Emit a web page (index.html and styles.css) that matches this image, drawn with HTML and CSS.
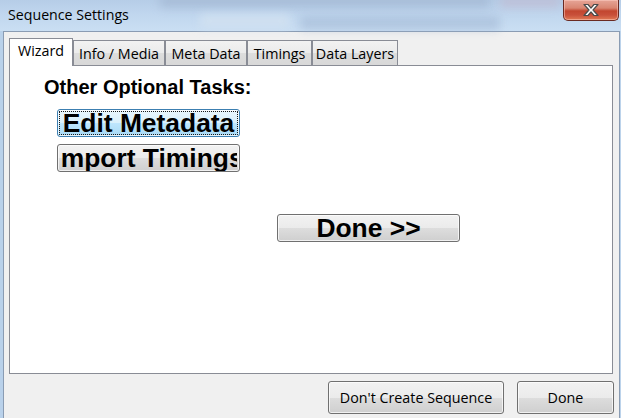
FILE: index.html
```html
<!DOCTYPE html>
<html>
<head>
<meta charset="utf-8">
<link rel="stylesheet" href="styles.css">
</head>
<body>
<div class="window">
  <div class="titlebar">
    <span class="glass g1"></span>
    <span class="glass g2"></span>
    <span class="glass g3"></span>
    <span class="glass g4"></span>
    <span class="title">Sequence Settings</span>
    <div class="close">
      <svg width="22" height="14" viewBox="0 0 22 14">
        <path d="M4 1.5h4l3 3.6 3-3.6h4l-5 5.5 5 5.5h-4l-3-3.6-3 3.6h-4l5-5.5z" fill="#fff" stroke="#4a4a4a" stroke-width="1.2" stroke-linejoin="round"/>
      </svg>
    </div>
  </div>
  <div class="client">
    <div class="tabs">
      <div class="tab active t-wizard">Wizard</div>
      <div class="tab t-info">Info / Media</div>
      <div class="tab t-meta">Meta Data</div>
      <div class="tab t-timings">Timings</div>
      <div class="tab t-layers">Data Layers</div>
    </div>
    <div class="panel">
      <div class="heading">Other Optional Tasks:</div>
      <button class="big focused b-edit"><span class="clip">Edit Metadata</span></button>
      <button class="big b-import"><span class="clip">Import Timings</span></button>
      <button class="big b-done"><span class="clip">Done &gt;&gt;</span></button>
    </div>
    <div class="footer">
      <button class="btn b-dont">Don't Create Sequence</button>
      <button class="btn b-fin">Done</button>
    </div>
  </div>
</div>
</body>
</html>
```
FILE: styles.css
```css
html, body {
  margin: 0;
  padding: 0;
  background: #f0f0f0;
}

.window {
  width: 621px;
  height: 418px;
  display: flex;
  flex-direction: column;
  background: linear-gradient(90deg, #b9d1ea 0%, #c3d8ee 50%, #bcd3eb 100%);
  overflow: hidden;
  font-family: "Open Sans", "Noto Sans", sans-serif;
}

.titlebar {
  height: 31px;
  flex: none;
  display: flex;
  align-items: flex-start;
  position: relative;
  background: linear-gradient(180deg, #b6cde7 0%, #c0d6ee 45%, #cadff3 100%);
}

.glass {
  position: absolute;
  filter: blur(4px);
  border-radius: 3px;
}
.g1 { left: 160px; top: -6px; width: 330px; height: 14px; background: rgba(150, 170, 200, 0.45); }
.g2 { left: 200px; top: 14px; width: 90px; height: 14px; background: rgba(210, 225, 240, 0.8); }
.g3 { left: 300px; top: 16px; width: 200px; height: 14px; background: rgba(150, 172, 205, 0.45); }
.g4 { left: 500px; top: -4px; width: 60px; height: 12px; background: rgba(200, 170, 190, 0.35); }

.title {
  position: relative;
  padding: 5px 0 0 8px;
  font-size: 14.2px;
  line-height: 19px;
  color: #000;
}

.close {
  position: relative;
  margin-left: auto;
  margin-right: 2px;
  width: 54px;
  height: 20px;
  border: 1px solid #6a2a22;
  border-top: none;
  border-radius: 0 0 5px 5px;
  background: linear-gradient(180deg, #e6a597 0%, #d98672 40%, #c2462f 55%, #c8503a 75%, #e07a55 100%);
  box-shadow: inset 0 0 0 1px rgba(255, 210, 200, 0.5);
  display: flex;
  align-items: center;
  justify-content: center;
}

.client {
  flex: 1;
  margin: 0 1px 0 3px;
  border: 1px solid #8a9cb3;
  border-bottom: none;
  background: #f0f0f0;
  padding: 6px 6px 0 5px;
  display: flex;
  flex-direction: column;
}

.tabs {
  height: 27px;
  display: flex;
  align-items: flex-end;
}

.tab {
  box-sizing: border-box;
  height: 25px;
  border: 1px solid #898c95;
  border-bottom: none;
  background: linear-gradient(180deg, #f2f2f2 0%, #ebebeb 50%, #dddddd 51%, #d8d8d8 100%);
  font-size: 14.3px;
  line-height: 19px;
  padding-top: 3px;
  text-align: center;
  color: #000;
  white-space: nowrap;
}

.tab.active {
  position: relative;
  z-index: 1;
  height: 28px;
  margin-bottom: -1px;
  padding-top: 2px;
  background: #fff;
}

.t-wizard { width: 64px; }
.t-info { width: 92px; }
.t-meta { width: 82px; }
.t-timings { width: 65px; }
.t-layers { width: 86px; }

.panel {
  box-sizing: border-box;
  width: 604px;
  height: 309px;
  border: 1px solid #898c95;
  background: #fff;
  padding: 9px 0 0 34px;
  display: flex;
  flex-direction: column;
  align-items: flex-start;
}

.heading {
  font-family: "Liberation Sans", Arial, sans-serif;
  font-weight: bold;
  font-size: 20px;
  line-height: 24px;
  color: #000;
}

button {
  font: inherit;
  margin: 0;
  padding: 0;
  cursor: default;
}

.big {
  position: relative;
  box-sizing: border-box;
  width: 183px;
  height: 28px;
  border: 1px solid #707070;
  border-radius: 3px;
  background: linear-gradient(180deg, #f2f2f2 0%, #ebebeb 50%, #dddddd 51%, #cfcfcf 100%);
  box-shadow: inset 0 0 0 1px rgba(255, 255, 255, 0.7);
  display: flex;
  padding: 0 2px;
}

.big .clip {
  flex: 1;
  overflow: hidden;
  display: flex;
  justify-content: center;
  align-items: center;
  white-space: nowrap;
  font-family: "Liberation Sans", Arial, sans-serif;
  font-weight: bold;
  font-size: 26.4px;
  line-height: 26px;
  color: #000;
}

.big.focused {
  border-color: #3c7fb1;
  background: linear-gradient(180deg, #eaf6fd 0%, #d9f0fc 50%, #bee6fd 51%, #a7d9f5 100%);
}

.big.focused::after {
  content: "";
  position: absolute;
  left: 1px;
  top: 1px;
  right: 1px;
  bottom: 1px;
  border: 1px dotted #1a1a1a;
  border-radius: 1px;
}

.b-edit { margin: 10px 0 0 13px; }
.b-import { margin: 7px 0 0 13px; }
.b-done { margin: 42px 0 0 233px; }

.footer {
  display: flex;
  justify-content: flex-end;
  gap: 13px;
  margin: 7px -1px 0 0;
}

.btn {
  box-sizing: border-box;
  height: 33px;
  border: 1px solid #707070;
  border-radius: 3px;
  background: linear-gradient(180deg, #f2f2f2 0%, #ebebeb 50%, #dddddd 51%, #cfcfcf 100%);
  box-shadow: inset 0 0 0 1px rgba(255, 255, 255, 0.7);
  font-size: 14.3px;
  color: #000;
  text-align: center;
}

.b-dont { width: 176px; }
.b-fin { width: 97px; }
```
